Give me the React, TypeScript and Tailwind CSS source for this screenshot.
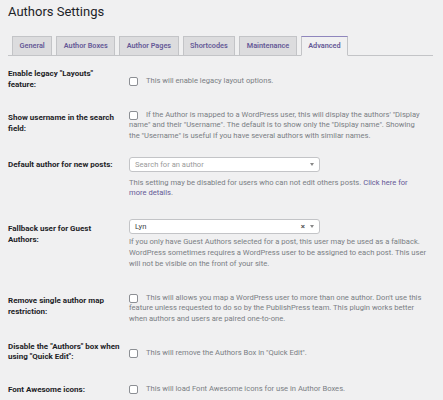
import React from "react";

const Checkbox = () => (
  <span className="inline-block h-[9px] w-[9px] shrink-0 rounded-[2px] border border-[#8c8f94] bg-white" />
);

const Arrow = () => (
  <span className="inline-block h-0 w-0 border-x-[2.5px] border-t-[3px] border-x-transparent border-t-[#888]" />
);

const tabs = ["General", "Author Boxes", "Author Pages", "Shortcodes", "Maintenance", "Advanced"];

const Label = ({ children }: { children: React.ReactNode }) => (
  <div className="w-[121px] shrink-0 pt-[10.5px] pr-2 text-[8px] font-bold leading-[11px] text-[#1d2327]">
    {children}
  </div>
);

const desc = "text-[7.6px] leading-[10.5px] text-[#7a7e84] whitespace-nowrap";

export default function App() {
  return (
    <div className="min-h-[400px] w-[443px] overflow-hidden bg-[#f0f0f1] pl-2 pr-[10px] font-['Roboto',sans-serif] text-[#1d2327]">
      <h1 className="pt-[4px] text-[13px] font-normal leading-[16px]">Authors Settings</h1>

      <div className="mt-[16px] flex h-[20px] items-end gap-[4px] border-b border-[#c3c4c7] pl-[4px]">
        {tabs.map((t) => {
          const active = t === "Advanced";
          return (
            <div
              key={t}
              className={
                active
                  ? "-mb-px flex h-[20px] items-center border border-[#c3c4c7] border-t-[#8f86bd] border-b-[#f0f0f1] bg-[#f0f0f1] px-[6.5px] text-[7.3px] font-semibold text-[#655997]"
                  : "-mb-px flex h-[20px] items-center border border-[#c3c4c7] bg-[#dcdcde] px-[6.5px] text-[7.3px] font-semibold text-[#655997]"
              }
            >
              {t}
            </div>
          );
        })}
      </div>

      <div className="mt-[1px]">
        {/* Row 1 */}
        <div className="flex h-[44px]">
          <Label>
            Enable legacy "Layouts"
            <br />
            feature:
          </Label>
          <div className="flex h-full items-center gap-[8px] pt-[4px]">
            <Checkbox />
            <span className={desc}>This will enable legacy layout options.</span>
          </div>
        </div>

        {/* Row 2 */}
        <div className="flex h-[47px]">
          <Label>
            Show username in the search
            <br />
            field:
          </Label>
          <div className="pt-[8.75px]">
            <div className={`${desc} flex h-[10.5px] items-center gap-[8px]`}>
              <Checkbox />
              <span>If the Author is mapped to a WordPress user, this will display the authors' "Display</span>
            </div>
            <div className={desc}>name" and their "Username". The default is to show only the "Display name". Showing</div>
            <div className={desc}>the "Username" is useful if you have several authors with similar names.</div>
          </div>
        </div>

        {/* Row 3 */}
        <div className="flex h-[64px]">
          <Label>Default author for new posts:</Label>
          <div className="pt-[9px]">
            <div className="flex h-[15px] w-[191px] items-center justify-between rounded-[3px] border border-[#c3c4c7] bg-white pl-[5px] pr-[5px]">
              <span className="text-[7.6px] text-[#9a9a9a]">Search for an author</span>
              <Arrow />
            </div>
            <div className="mt-[5.75px]">
              <div className={desc}>
                This setting may be disabled for users who can not edit others posts.{" "}
                <span className="text-[#655997]">Click here for</span>
              </div>
              <div className={desc}>
                <span className="text-[#655997]">more details</span>.
              </div>
            </div>
          </div>
        </div>

        {/* Row 4 */}
        <div className="flex h-[72px]">
          <Label>
            Fallback user for Guest
            <br />
            Authors:
          </Label>
          <div className="pt-[7px]">
            <div className="flex h-[15px] w-[191px] items-center justify-between rounded-[3px] border border-[#c3c4c7] bg-white pl-[5px] pr-[5px]">
              <span className="text-[7.6px] text-[#3c434a]">Lyn</span>
              <span className="flex items-center gap-[5px]">
                <span className="text-[8px] font-bold leading-none text-[#555]">×</span>
                <Arrow />
              </span>
            </div>
            <div className="mt-[1.5px] [&>div]:leading-[11px]">
              <div className={desc}>If you only have Guest Authors selected for a post, this user may be used as a fallback.</div>
              <div className={desc}>WordPress sometimes requires a WordPress user to be assigned to each post. This user</div>
              <div className={desc}>will not be visible on the front of your site.</div>
            </div>
          </div>
        </div>

        {/* Row 5 */}
        <div className="flex h-[47.5px]">
          <Label>
            Remove single author map
            <br />
            restriction:
          </Label>
          <div className="pt-[8.75px]">
            <div className={`${desc} flex h-[10.5px] items-center gap-[8px]`}>
              <Checkbox />
              <span>This will allows you map a WordPress user to more than one author. Don't use this</span>
            </div>
            <div className={desc}>feature unless requested to do so by the PublishPress team. This plugin works better</div>
            <div className={desc}>when authors and users are paired one-to-one.</div>
          </div>
        </div>

        {/* Row 6 */}
        <div className="flex h-[42px]">
          <div className="w-[121px] shrink-0 pt-[10.5px] pr-2 text-[8px] font-bold leading-[10px] text-[#1d2327]">
            Disable the "Authors" box when
            <br />
            using "Quick Edit":
          </div>
          <div className="flex h-full items-center gap-[8px] pt-[1px]">
            <Checkbox />
            <span className={desc}>This will remove the Authors Box in "Quick Edit".</span>
          </div>
        </div>

        {/* Row 7 */}
        <div className="flex h-[27px]">
          <div className="w-[121px] shrink-0 pt-[10px] pr-2 text-[8px] font-bold leading-[11px] text-[#1d2327]">
            Font Awesome icons:
          </div>
          <div className="flex h-[31px] items-center gap-[8px] pt-[0px]">
            <Checkbox />
            <span className={desc}>This will load Font Awesome icons for use in Author Boxes.</span>
          </div>
        </div>
      </div>
    </div>
  );
}
